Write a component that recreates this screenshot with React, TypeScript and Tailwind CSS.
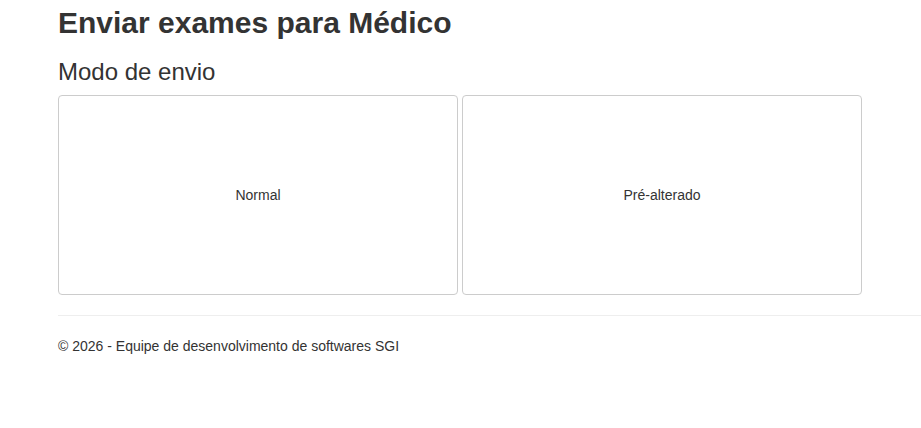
import React from "react";

export default function App() {
  return (
    <div
      className="min-h-[428px] bg-white text-[#333] pl-[58px] pt-[6px]"
      style={{ fontFamily: '"Liberation Sans", Arial, Helvetica, sans-serif' }}
    >
      <h2 className="text-[30px] leading-[33px] font-bold m-0">Enviar exames para Médico</h2>
      <h3 className="text-[24px] leading-[26.4px] font-normal mt-[20px] mb-[10px]">Modo de envio</h3>
      <div className="flex gap-[4px]">
        <button className="w-[400px] h-[200px] border border-[#ccc] rounded-[4px] bg-white text-[14px] leading-[20px] text-[#333]">
          Normal
        </button>
        <button className="w-[400px] h-[200px] border border-[#ccc] rounded-[4px] bg-white text-[14px] leading-[20px] text-[#333]">
          Pré-alterado
        </button>
      </div>
      <hr className="mt-[20px] mb-[20px] border-0 border-t border-[#eee]" />
      <footer>
        <p className="text-[14px] leading-[20px] m-0">© 2026 - Equipe de desenvolvimento de softwares SGI</p>
      </footer>
    </div>
  );
}
